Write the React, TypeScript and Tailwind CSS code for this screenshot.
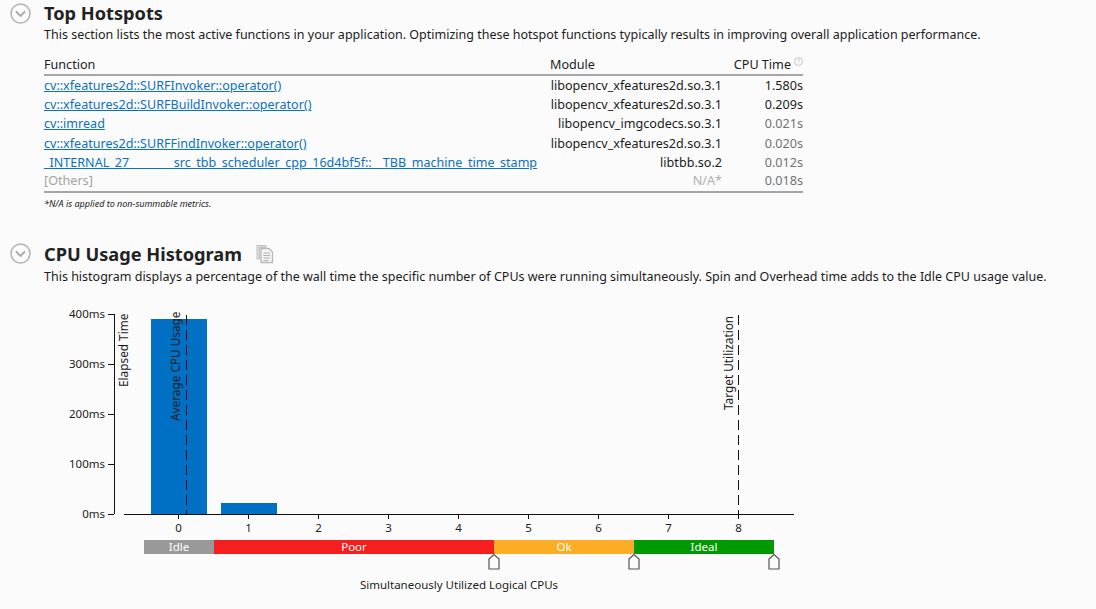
const rows = [
  { name: 'cv::xfeatures2d::SURFInvoker::operator()', module: 'libopencv_xfeatures2d.so.3.1', time: '1.580s', hot: true },
  { name: 'cv::xfeatures2d::SURFBuildInvoker::operator()', module: 'libopencv_xfeatures2d.so.3.1', time: '0.209s', hot: true },
  { name: 'cv::imread', module: 'libopencv_imgcodecs.so.3.1', time: '0.021s' },
  { name: 'cv::xfeatures2d::SURFFindInvoker::operator()', module: 'libopencv_xfeatures2d.so.3.1', time: '0.020s' },
  { name: '_INTERNAL_27________src_tbb_scheduler_cpp_16d4bf5f::__TBB_machine_time_stamp', module: 'libtbb.so.2', time: '0.012s' },
];

function Chevron() {
  return (
    <svg width="22" height="22" viewBox="0 0 22 22" className="shrink-0">
      <circle cx="10.5" cy="10.5" r="9.5" fill="none" stroke="#b5b5b5" strokeWidth="1.6" />
      <path d="M6 8.5 L10.5 13 L15 8.5" fill="none" stroke="#a8a8a8" strokeWidth="1.8" />
    </svg>
  );
}

function CopyIcon() {
  return (
    <svg width="18" height="20" viewBox="0 0 18 20" className="ml-[14px] mt-[1px]">
      <path d="M1 1.5 H10 V3.5 H3.5 V15 H1 Z" fill="#dcdcdc" stroke="#c0c0c0" />
      <path d="M5 4.5 H13 L16.5 8 V18.5 H5 Z" fill="#f4f4f4" stroke="#b8b8b8" strokeWidth="1.3" />
      <path d="M7.5 9 H14 M7.5 11.5 H14 M7.5 14 H14 M7.5 16.5 H12" stroke="#b0b0b0" strokeWidth="1.1" />
    </svg>
  );
}

function Histogram() {
  const ink = '#111';
  const label = { fontFamily: '"Noto Sans", sans-serif', fontSize: 11.5, fill: '#1c1c1c' };
  const side = { ...label, fontSize: 11.8 };
  return (
    <svg width="760" height="300" viewBox="60 300 760 300" className="block">
      {/* y axis */}
      <path d="M114.5 315 V515" stroke={ink} strokeWidth="1" />
      {[0, 100, 200, 300, 400].map((v) => {
        const y = 515 - v / 2;
        return (
          <g key={v}>
            <path d={`M108 ${y + 0.5} H114`} stroke={ink} />
            <text x="105" y={y + 4} textAnchor="end" {...label}>{v}ms</text>
          </g>
        );
      })}
      <text transform="translate(128 388) rotate(-90)" {...side}>Elapsed Time</text>

      {/* bars */}
      <rect x="151" y="320" width="56" height="195" fill="#0070c5" />
      <rect x="221" y="504" width="56" height="11" fill="#0070c5" />

      {/* x axis */}
      <path d="M124 515.5 H794" stroke={ink} />
      {[0, 1, 2, 3, 4, 5, 6, 7, 8].map((n) => (
        <g key={n}>
          <path d={`M${178.5 + n * 70} 515 V520`} stroke={ink} />
          <text x={178.5 + n * 70} y="533" textAnchor="middle" {...label}>{n}</text>
        </g>
      ))}

      {/* reference lines */}
      <path d="M186.5 316 V515" stroke={ink} strokeDasharray="10 5" />
      <text transform="translate(180 422) rotate(-90)" {...side}>Average CPU Usage</text>
      <path d="M738.5 316 V515" stroke={ink} strokeDasharray="10 5" />
      <text transform="translate(733 411) rotate(-90)" {...side}>Target Utilization</text>

      {/* utilization bands */}
      <rect x="144" y="541" width="70" height="14" fill="#999999" />
      <rect x="214" y="541" width="280" height="14" fill="#f61f20" />
      <rect x="494" y="541" width="140" height="14" fill="#fdac25" />
      <rect x="634" y="541" width="140" height="14" fill="#009900" />
      <text x="179" y="552" textAnchor="middle" {...label} fill="#fff">Idle</text>
      <text x="354" y="552" textAnchor="middle" {...label} fill="#fff">Poor</text>
      <text x="564" y="552" textAnchor="middle" {...label} fill="#fff">Ok</text>
      <text x="704" y="552" textAnchor="middle" {...label} fill="#fff">Ideal</text>

      {/* threshold sliders */}
      {[494, 634, 774].map((x) => (
        <path
          key={x}
          d={`M${x - 5} 560 L${x} 555.5 L${x + 5} 560 V570 H${x - 5} Z`}
          fill="#fbfbfb"
          stroke="#555"
          strokeWidth="1.2"
        />
      ))}

      <text x="459" y="590" textAnchor="middle" {...label}>Simultaneously Utilized Logical CPUs</text>
    </svg>
  );
}

export default function App() {
  return (
    <div className="w-[1096px] h-[609px] overflow-hidden bg-[#fbfbfb] pl-[10px] pt-[3px] text-[#1c1c1c] font-['Noto_Sans',sans-serif]">
      <section className="flex gap-[12px]">
        <Chevron />
        <div className="flex-1">
          <h2 className="text-[18.2px] leading-[22px] mt-[-1px] font-bold text-[#222]">Top Hotspots</h2>
          <p className="text-[12.5px] leading-[17px] mt-[2px] whitespace-nowrap">
            This section lists the most active functions in your application. Optimizing these hotspot functions typically results in improving overall application performance.
          </p>

          <div className="w-[759px] mt-[13px] text-[12.6px]">
            <div className="flex items-end pb-[1px] leading-[16px] border-b-2 border-[#a6a6a6] h-[20px]">
              <div className="w-[506px]">Function</div>
              <div className="w-[172px]">Module</div>
              <div className="flex-1 text-right whitespace-nowrap relative pr-[12px]">
                CPU Time
                <span className="absolute right-0 top-0 w-[9px] h-[9px] rounded-full border border-[#c4c4c4] text-[6px] leading-[7px] text-center text-[#b5b5b5]">?</span>
              </div>
            </div>
            {rows.map((row) => (
              <div key={row.name} className="flex h-[19.2px] items-center leading-[19px]">
                <a className="w-[506px] text-[#0b71c2] underline whitespace-nowrap text-[12.55px]">{row.name}</a>
                <div className="w-[172px] text-right whitespace-nowrap">{row.module}</div>
                <div className={row.hot ? 'flex-1 text-right' : 'flex-1 text-right text-[#6f7276]'}>{row.time}</div>
              </div>
            ))}
            <div className="flex items-center leading-[19px] border-b-2 border-[#a6a6a6] h-[21px] pb-[1px]">
              <div className="w-[506px] text-[#a3a3a3]">[Others]</div>
              <div className="w-[172px] text-right text-[#b0b0b0]">N/A*</div>
              <div className="flex-1 text-right text-[#6f7276]">0.018s</div>
            </div>
            <p className="text-[9px] italic leading-[12px] mt-[5px]">*N/A is applied to non-summable metrics.</p>
          </div>
        </div>
      </section>

      <section className="flex gap-[12px] mt-[33px]">
        <Chevron />
        <div className="flex-1">
          <div className="flex items-center">
            <h2 className="text-[18.2px] leading-[22px] font-bold text-[#222]">CPU Usage Histogram</h2>
            <CopyIcon />
          </div>
          <p className="text-[12.5px] leading-[17px] mt-[3px] whitespace-nowrap">
            This histogram displays a percentage of the wall time the specific number of CPUs were running simultaneously. Spin and Overhead time adds to the Idle CPU usage value.
          </p>
        </div>
      </section>

      <div className="ml-[50px] mt-[14px]">
        <Histogram />
      </div>
    </div>
  );
}
